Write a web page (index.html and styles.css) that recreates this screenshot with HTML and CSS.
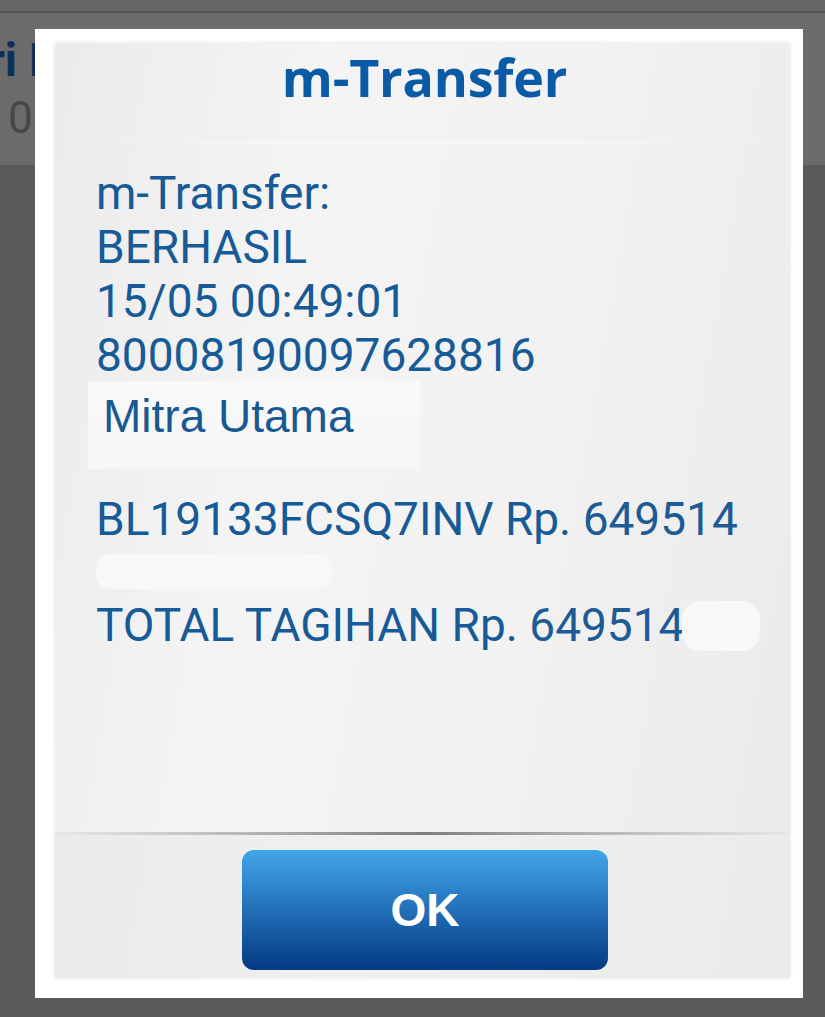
FILE: index.html
```html
<!DOCTYPE html>
<html lang="id">
<head>
<meta charset="utf-8">
<title>m-Transfer</title>
<link rel="stylesheet" href="styles.css">
</head>
<body>
<div class="screen">
  <div class="topstrip"></div>
  <div class="header">
    <div class="h-title">ri I</div>
    <div class="h-sub">0</div>
  </div>
  <div class="rest"></div>

  <div class="modal">
    <div class="panel">
      <div class="title">m-Transfer</div>
      <div class="hl"></div>
      <div class="body">
        <div class="line">m-Transfer:</div>
        <div class="line">BERHASIL</div>
        <div class="line">15/05 00:49:01</div>
        <div class="line">80008190097628816</div>
        <div class="name-box"><span class="name">Mitra Utama</span></div>
        <div class="line bl">BL19133FCSQ7INV Rp. <span class="amt">649514</span></div>
        <div class="patch"></div>
        <div class="line total">TOTAL TAGIHAN Rp. <span class="amt">649514</span><span class="patch2"></span></div>
      </div>
      <div class="sep"></div>
      <div class="footer">
        <button class="ok">OK</button>
      </div>
    </div>
  </div>
</div>
</body>
</html>
```

FILE: styles.css
```css
* { box-sizing: border-box; }
html, body { margin: 0; padding: 0; }
body {
  width: 825px;
  height: 1017px;
  overflow: hidden;
  background: #5a5a5a;
  font-family: Roboto, "Liberation Sans", sans-serif;
}
.screen {
  position: relative;
  width: 825px;
  height: 1017px;
  display: flex;
  flex-direction: column;
}
.topstrip {
  height: 13px;
  background: #666666;
  border-bottom: 2px solid #555555;
}
.header {
  height: 152px;
  background: #6b6b6b;
  position: relative;
  overflow: hidden;
}
.h-title {
  margin-left: -12px;
  margin-top: 22px;
  font-family: Roboto, sans-serif;
  font-weight: 700;
  font-size: 46px;
  line-height: 50px;
  color: #0d2f5a;
  white-space: nowrap;
}
.h-sub {
  margin-left: 8px;
  margin-top: 8px;
  font-family: Roboto, sans-serif;
  font-size: 44px;
  line-height: 50px;
  color: #474747;
}
.rest { flex: 1; background: #5a5a5a; }

.modal {
  position: absolute;
  left: 35px;
  top: 29px;
  width: 768px;
  height: 969px;
  background: #ffffff;
  padding: 14px 13px 20px 20px;
}
.panel {
  height: 100%;
  display: flex;
  flex-direction: column;
  background: linear-gradient(100deg, #ebebeb 0%, #f4f4f4 30%, #f2f2f2 60%, #eaeaea 100%);
  box-shadow: 0 0 4px rgba(0,0,0,0.12);
}
.title {
  height: 99px;
  text-align: center;
  font-family: "Open Sans", Roboto, sans-serif;
  font-weight: 700;
  font-size: 52px;
  line-height: 64px;
  padding-top: 2px;
  padding-left: 4px;
  color: #0b5aa6;
  letter-spacing: -0.2px;
}
.hl {
  height: 1px;
  background: linear-gradient(to right, rgba(255,255,255,0), rgba(255,255,255,0.7) 30%, rgba(255,255,255,0.7) 70%, rgba(255,255,255,0));
}
.body {
  flex: 1;
  padding: 23px 20px 0 41px;
  color: #165a97;
}
.line {
  font-family: Roboto, sans-serif;
  font-size: 46px;
  line-height: 54px;
  white-space: nowrap;
}
.name-box {
  margin-top: -1px;
  margin-left: -8px;
  width: 332px;
  height: 88px;
  padding: 8px 0 0 15px;
  background: linear-gradient(to bottom, #f9f9f9, #f6f6f6);
}
.name {
  font-family: "Liberation Sans", Arial, sans-serif;
  font-size: 46px;
  line-height: 54px;
  color: #1a5890;
}
.bl { margin-top: 23px; }
.amt { color: #1c5b95; }
.patch {
  margin-top: 8px;
  width: 236px;
  height: 35px;
  border-radius: 14px;
  background: #f8f8f8;
}
.total { margin-top: 9px; }
.patch2 {
  display: inline-block;
  width: 78px;
  height: 50px;
  margin-left: -2px;
  vertical-align: -10px;
  border-radius: 18px;
  background: #f8f8f8;
}
.sep {
  height: 3px;
  background: linear-gradient(to right, rgba(200,200,205,0.2), #b8b8bc 25%, #7e7e84 50%, #b8b8bc 75%, rgba(220,220,224,0.3));
}
.footer {
  height: 143px;
  padding-top: 15px;
  display: flex;
  justify-content: center;
  background: linear-gradient(100deg, #eaeaea, #f0f0f0 40%, #ebebeb);
}
.ok {
  width: 366px;
  height: 120px;
  margin-left: 5px;
  border: none;
  border-radius: 12px;
  background: linear-gradient(to bottom, #42a6e8 0%, #2f86cc 30%, #1a5ea8 65%, #023a82 100%);
  color: #ffffff;
  font-family: "Liberation Sans", Arial, sans-serif;
  font-weight: 700;
  font-size: 46px;
  padding: 0;
  cursor: pointer;
}
```
